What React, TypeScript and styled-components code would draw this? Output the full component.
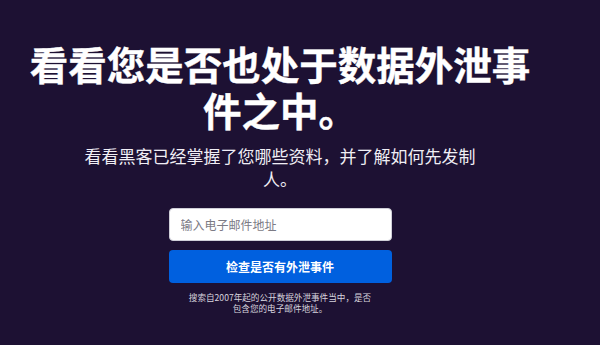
import React from "react";
import styled, { createGlobalStyle } from "styled-components";

const GlobalStyle = createGlobalStyle`
  html, body {
    margin: 0;
    padding: 0;
    background-color: #1d1133;
  }

  body {
    font-family: "Noto Sans CJK SC", "Noto Sans", sans-serif;
    color: #ffffff;
  }

  * {
    box-sizing: border-box;
  }
`;

const Hero = styled.main`
  align-items: center;
  background-color: #1d1133;
  display: flex;
  flex-direction: column;
  min-height: 345px;
  padding: 40px 40px 0 0;
  width: 600px;
`;

const Title = styled.h1`
  font-size: 38.5px;
  font-weight: 700;
  line-height: 46px;
  margin: 0;
  max-width: 522px;
  text-align: center;
  -webkit-text-stroke: 0.4px #ffffff;
`;

const Lead = styled.p`
  color: #f0eef5;
  font-size: 17px;
  font-weight: 400;
  line-height: 23px;
  margin: 12px 0 0;
  max-width: 400px;
  text-align: center;
`;

const Form = styled.form`
  display: flex;
  flex-direction: column;
  gap: 9px;
  margin-top: 18px;
  width: 223px;
`;

const EmailInput = styled.input.attrs({ type: "email" })`
  background-color: #ffffff;
  border: 1px solid #cfcfd8;
  border-radius: 4px;
  color: #15141a;
  font-family: "Noto Sans CJK SC", "Noto Sans", sans-serif;
  font-size: 12px;
  height: 33px;
  outline: none;
  padding: 0 11px;

  &::placeholder {
    color: #7c7b85;
  }
`;

const SubmitButton = styled.button`
  background-color: #0060df;
  border: none;
  border-radius: 4px;
  color: #ffffff;
  cursor: pointer;
  font-family: "Noto Sans CJK SC", "Noto Sans", sans-serif;
  font-size: 12px;
  font-weight: 700;
  height: 33px;
`;

const Note = styled.p`
  color: #d7d4de;
  font-size: 8.6px;
  line-height: 11px;
  margin: 9px 0 0;
  max-width: 186px;
  text-align: center;
`;

export default function App() {
  return (
    <>
      <GlobalStyle />
      <Hero>
        <Title>看看您是否也处于数据外泄事件之中。</Title>
        <Lead>看看黑客已经掌握了您哪些资料，并了解如何先发制人。</Lead>
        <Form onSubmit={(e) => e.preventDefault()}>
          <EmailInput placeholder="输入电子邮件地址" />
          <SubmitButton type="submit">检查是否有外泄事件</SubmitButton>
        </Form>
        <Note>搜索自2007年起的公开数据外泄事件当中，是否包含您的电子邮件地址。</Note>
      </Hero>
    </>
  );
}
